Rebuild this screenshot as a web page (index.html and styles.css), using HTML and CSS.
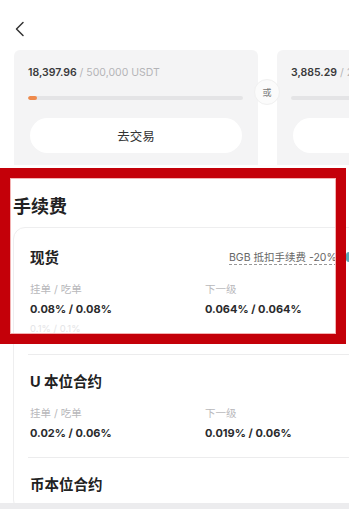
FILE: index.html
```html
<!DOCTYPE html>
<html lang="zh">
<head>
<meta charset="utf-8">
<link rel="stylesheet" href="styles.css">
</head>
<body>
<div class="page">
  <main class="main">
    <header class="header">
      <svg class="back" width="12" height="16" viewBox="0 0 12 16"><polyline points="9,1.5 2.5,8 9,14.5" fill="none" stroke="#333" stroke-width="1.5" stroke-linecap="round" stroke-linejoin="round"/></svg>
    </header>
    <div class="cards">
      <div class="card">
        <div class="amount"><b>18,397.96</b> / 500,000 USDT</div>
        <div class="track"><div class="fill" style="width:4%"></div></div>
        <div class="btn">去交易</div>
      </div>
      <div class="card">
        <div class="amount"><b>3,885.29</b> / 20,000,000 USDT</div>
        <div class="track"><div class="fill" style="width:0%"></div></div>
        <div class="btn">去交易</div>
      </div>
      <div class="or">或</div>
    </div>

    <section class="fees">
      <h2 class="fees-title">手续费</h2>
      <div class="fee-card">
        <div class="fee-block spot">
          <div class="fee-head">
            <h3 class="fee-name">现货</h3>
            <span class="bgb">BGB 抵扣手续费 -20%</span>
          </div>
          <div class="fee-grid">
            <div><div class="lbl">挂单 / 吃单</div><div class="val">0.08% / 0.08%</div></div>
            <div><div class="lbl">下一级</div><div class="val">0.064% / 0.064%</div></div>
          </div>
          <div class="ghost">0.1% / 0.1%</div>
        </div>
        <div class="fee-block">
          <div class="fee-head"><h3 class="fee-name">U 本位合约</h3></div>
          <div class="fee-grid">
            <div><div class="lbl">挂单 / 吃单</div><div class="val">0.02% / 0.06%</div></div>
            <div><div class="lbl">下一级</div><div class="val">0.019% / 0.06%</div></div>
          </div>
        </div>
        <div class="fee-block">
          <div class="fee-head"><h3 class="fee-name">币本位合约</h3></div>
        </div>
      </div>
    </section>
  </main>
  <div class="bottom-bar"></div>
  <div class="highlight"></div>
  <div class="edge-dot"></div>
</div>
</body>
</html>
```
FILE: styles.css
```css
* { box-sizing: border-box; }
html, body { margin: 0; padding: 0; }
body {
  background: #fff;
  font-family: "Inter", "Noto Sans CJK SC", sans-serif;
  color: #222;
  overflow: hidden;
}
.page {
  position: relative;
  width: 349px;
  height: 509px;
  display: grid;
  grid-template-rows: 1fr 6px;
  overflow: hidden;
}
.main { overflow: hidden; }
.header {
  height: 50px;
  padding: 21px 0 0 14px;
}
.back { display: block; }

.cards {
  position: relative;
  display: flex;
  gap: 19px;
  padding-left: 14px;
  height: 115px;
  overflow: hidden;
}
.card {
  flex: 0 0 244px;
  background: #f4f4f5;
  border-radius: 6px 6px 0 0;
  padding: 16px 15px 0 14px;
  overflow: hidden;
}
.amount {
  font-size: 10.5px;
  line-height: 13px;
  color: #b4b4b8;
  white-space: nowrap;
}
.amount b { color: #3a3a3c; font-weight: 600; }
.track {
  margin-top: 17px;
  height: 4px;
  border-radius: 2px;
  background: #e4e4e6;
  overflow: hidden;
}
.fill { height: 100%; background: #ef8a4c; border-radius: 2px; }
.btn {
  margin: 18px 1px 0 2px;
  height: 35px;
  border-radius: 18px;
  background: #fff;
  display: flex;
  align-items: center;
  justify-content: center;
  font-size: 12.5px;
  color: #333;
}
.or {
  position: absolute;
  left: 254px;
  top: 29px;
  width: 26px;
  height: 26px;
  border-radius: 50%;
  background: #fbfbfb;
  border: 1px solid #f0f0f0;
  display: flex;
  align-items: center;
  justify-content: center;
  font-size: 9px;
  color: #777;
}

.fees { padding: 31px 0 0 13px; }
.fees-title {
  margin: 0;
  font-size: 18px;
  line-height: 22px;
  font-weight: 700;
  color: #222;
}
.fee-card {
  margin-top: 9px;
  width: 360px;
  border: 1px solid #eeeeef;
  border-radius: 12px;
  padding: 0 0 0 16px;
}
.fee-block {
  padding: 17px 0 16px;
  border-top: 1px solid #ececed;
}
.fee-block.spot { border-top: none; padding: 20px 0 18px; }
.fee-block + .fee-block { margin-left: -2px; padding-left: 2px; }
.fee-head {
  display: grid;
  grid-template-columns: 199px auto;
  align-items: center;
}
.fee-name {
  margin: 0;
  font-size: 14.5px;
  line-height: 20px;
  font-weight: 700;
  color: #222;
}
.bgb {
  justify-self: start;
  font-size: 10.5px;
  color: #666;
  border-bottom: 1px dashed #999;
  line-height: 13px;
  white-space: nowrap;
}
.fee-grid {
  margin-top: 15px;
  display: grid;
  grid-template-columns: 175px 1fr;
}
.lbl {
  font-size: 10.5px;
  line-height: 14px;
  color: #b8b8bb;
}
.val {
  margin-top: 4px;
  font-size: 11px;
  line-height: 16px;
  font-weight: 700;
  color: #2a2a2c;
}
.ghost {
  margin-top: 5px;
  font-size: 9.5px;
  line-height: 14px;
  color: #e4e4e6;
}
.bottom-bar { background: #ececee; }

.highlight {
  position: absolute;
  left: 0;
  top: 168px;
  width: 346px;
  height: 176px;
  border: 10px solid #c40009;
  box-shadow: inset 0 0 0 1px #f3b3b3;
}
.edge-dot {
  position: absolute;
  left: 346px;
  top: 252px;
  width: 6px;
  height: 10px;
  border-radius: 3px;
  background: #5aa9b8;
}
```
